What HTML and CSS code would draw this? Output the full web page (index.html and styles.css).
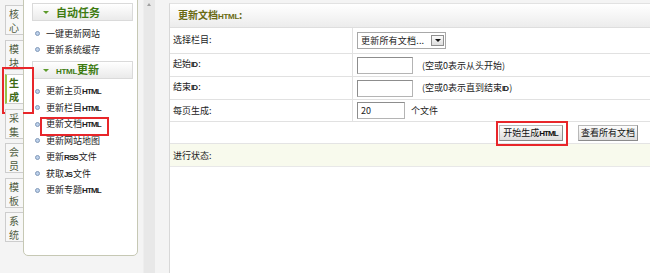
FILE: index.html
```html
<!DOCTYPE html>
<html lang="zh-CN">
<head>
<meta charset="utf-8">
<title>更新文档HTML</title>
<link rel="stylesheet" href="styles.css">
</head>
<body>
<div class="app">
  <nav class="tabs">
    <div class="tab">核<br>心</div>
    <div class="tab">模<br>块</div>
    <div class="tab active mark-tab">生<br>成</div>
    <div class="tab">采<br>集</div>
    <div class="tab">会<br>员</div>
    <div class="tab">模<br>板</div>
    <div class="tab">系<br>统</div>
  </nav>
  <aside class="menu">
    <div class="menu-head"><span class="tri"></span><span>自动任务</span></div>
    <ul class="menu-list">
      <li><span class="dot"></span><span>一键更新网站</span></li>
      <li><span class="dot"></span><span>更新系统缓存</span></li>
    </ul>
    <div class="menu-head head2"><span class="tri"></span><span><span class="en-head">HTML</span>更新</span></div>
    <ul class="menu-list">
      <li><span class="dot"></span><span>更新主页<span class="en">HTML</span></span></li>
      <li><span class="dot"></span><span>更新栏目<span class="en">HTML</span></span></li>
      <li class="mark-item"><span class="dot"></span><span>更新文档<span class="en">HTML</span></span></li>
      <li><span class="dot"></span><span>更新网站地图</span></li>
      <li><span class="dot"></span><span>更新<span class="en">RSS</span>文件</span></li>
      <li><span class="dot"></span><span>获取<span class="en">JS</span>文件</span></li>
      <li><span class="dot"></span><span>更新专题<span class="en">HTML</span></span></li>
    </ul>
  </aside>
  <div class="gutter"><div class="bar"><span class="up"></span></div></div>
  <main class="main">
    <div class="main-head"><span>更新文档<span class="en-head">HTML</span>:</span></div>
    <div class="form">
      <div class="row r1">
        <div class="label"><span>选择栏目:</span></div>
        <div class="field">
          <div class="select"><span class="sel-text">更新所有文档...</span><span class="sel-btn"><span class="down"></span></span></div>
        </div>
      </div>
      <div class="row">
        <div class="label"><span>起始<span class="en">ID</span>:</span></div>
        <div class="field"><input class="inp" type="text" value=""><span class="hint">(空或0表示从头开始)</span></div>
      </div>
      <div class="row">
        <div class="label"><span>结束<span class="en">ID</span>:</span></div>
        <div class="field"><input class="inp" type="text" value=""><span class="hint">(空或0表示直到结束<span class="en">ID</span>)</span></div>
      </div>
      <div class="row r4">
        <div class="label"><span>每页生成:</span></div>
        <div class="field"><input class="inp small" type="text" value="20"><span class="unit">个文件</span></div>
      </div>
    </div>
    <div class="actions">
      <span class="mark-btn"><button class="btn b1" type="button">开始生成<span class="en">HTML</span></button></span>
      <button class="btn b2" type="button">查看所有文档</button>
    </div>
    <div class="status">进行状态:</div>
  </main>
</div>
</body>
</html>
```
FILE: styles.css
```css
* { box-sizing: border-box; margin: 0; padding: 0; }
html, body { width: 650px; height: 273px; overflow: hidden; }
body {
  background: #f4f4f4;
  font: 9px/1 "Noto Sans CJK SC", "Liberation Sans", sans-serif;
  color: #222;
}
.app { display: flex; height: 273px; }

/* left vertical tabs */
.tabs {
  width: 23px;
  flex: none;
  display: flex;
  flex-direction: column;
  gap: 4.5px;
  padding: 5px 0 0 5px;
}
.tab {
  position: relative;
  height: 30px;
  width: 18px;
  border: 1px solid #cdcdcd;
  border-right: none;
  background: #f7f7f7;
  color: #4f5c40;
  font-size: 10px;
  line-height: 14px;
  padding: 1px 0 0 3px;
}
.tab.active {
  background: #fff;
  border-left: 2px solid #95c24a;
  padding-left: 2px;
  color: #3d6a14;
  font-weight: bold;
}
.mark-tab::after {
  content: "";
  position: absolute;
  left: -5px;
  top: -8px;
  width: 28px;
  height: 43px;
  border: 2px solid #e8262a;
}

/* menu panel */
.menu {
  width: 115px;
  flex: none;
  height: 260px;
  margin-top: -4px;
  background: #fff;
  border: 1px solid #c6c8b4;
  border-radius: 0 0 5px 5px;
  padding-top: 6px;
}
.menu-head {
  margin-left: 8px;
  width: 101px;
  height: 18px;
  border: 1px solid #dadada;
  background: linear-gradient(#ffffff, #eaeaea);
  display: flex;
  align-items: center;
  padding-left: 10px;
  gap: 7px;
  color: #3e7b12;
  font-weight: bold;
  font-size: 11px;
  white-space: nowrap;
}
.head2 { margin-top: 3px; }
.tri {
  width: 0; height: 0;
  border-left: 3px solid transparent;
  border-right: 3px solid transparent;
  border-top: 3px solid #5c9a2a;
}
.en-head { font-family: "Liberation Sans", sans-serif; font-size: 8px; font-weight: bold; letter-spacing: -0.3px; }
.en { font-family: "Liberation Sans", sans-serif; font-size: 8px; font-weight: bold; letter-spacing: -0.9px; margin-right: 1px; }
.menu-list { list-style: none; padding-top: 4px; }
.menu-list li {
  position: relative;
  height: 16.5px;
  display: flex;
  align-items: center;
  padding-left: 11px;
  gap: 6px;
  color: #222;
  white-space: nowrap;
}
.dot {
  width: 5px; height: 5px;
  border-radius: 50%;
  background: #bcd0ea;
  border: 1px solid #8199b8;
}
.mark-item::after {
  content: "";
  position: absolute;
  left: 16px;
  top: 1px;
  width: 65px;
  height: 15px;
  border: 2px solid #e8262a;
}

/* scroll gutter */
.gutter {
  width: 31px;
  flex: none;
  padding-left: 5px;
}
.bar {
  position: relative;
  width: 12px;
  height: 100%;
  background: #e8e8e8;
  border-left: 1px solid #eeeeee;
}
.up {
  position: absolute;
  left: 3px;
  top: 3px;
  width: 0; height: 0;
  border-left: 2.5px solid transparent;
  border-right: 2.5px solid transparent;
  border-bottom: 3px solid #a0a0a0;
}

/* main */
.main {
  flex: 1;
  margin-top: 3px;
  background: #fff;
  border-left: 1px solid #d8d8d8;
  border-top: 1px solid #e2e2e2;
  display: flex;
  flex-direction: column;
}
.main-head {
  height: 24px;
  border-bottom: 1px solid #dedede;
  background: linear-gradient(#ffffff, #ececec);
  display: flex;
  align-items: center;
  padding-left: 8px;
  color: #6a6a12;
  font-weight: bold;
  font-size: 10px;
}
.row {
  display: grid;
  grid-template-columns: 183px 1fr;
  height: 23px;
  border-bottom: 1px solid #e1e1e1;
}
.row.r1 { height: 26px; }
.row.r4 { height: 22px; }
.label {
  border-right: 1px solid #e1e1e1;
  display: flex;
  align-items: center;
  padding: 0 0 2px 3px;
  white-space: nowrap;
}
.r4 .label { padding-bottom: 0; }
.field {
  display: flex;
  align-items: center;
  padding-left: 4px;
  white-space: nowrap;
}
.select {
  width: 89px;
  height: 17px;
  border: 1px solid #a8a8a8;
  display: flex;
  align-items: center;
  justify-content: space-between;
  padding: 0 1px 0 3px;
  background: #fff;
}
.sel-text { letter-spacing: 0.2px; }
.sel-btn {
  width: 13px;
  height: 11px;
  border: 1px solid #8f8f8f;
  background: linear-gradient(#fafafa, #dedede);
  display: flex;
  align-items: center;
  justify-content: center;
}
.down {
  width: 0; height: 0;
  border-left: 3px solid transparent;
  border-right: 3px solid transparent;
  border-top: 3px solid #111;
}
.inp {
  width: 56px;
  height: 17px;
  border: 1px solid #b4b4b4;
  border-top-color: #8d8d8d;
  border-left-color: #8d8d8d;
  font: 9px "Noto Sans CJK SC", "Liberation Sans", sans-serif;
  padding-left: 3px;
  color: #222;
  outline: none;
}
.inp.small { width: 48px; }
.hint { margin-left: 9px; color: #222; }
.unit { margin-left: 6px; }

.actions {
  height: 22px;
  border-bottom: 1px solid #e4e4e4;
  display: flex;
  align-items: center;
  justify-content: flex-end;
  gap: 15px;
  padding-right: 12px;
}
.mark-btn { position: relative; display: block; height: 16px; }
.mark-btn::after {
  content: "";
  position: absolute;
  left: -3px;
  top: -4px;
  right: -5px;
  bottom: -5px;
  border: 2px solid #e8262a;
}
.btn {
  display: block;
  height: 16px;
  padding: 0;
  border: 1px solid #b8b8b8;
  border-right-color: #8c8c8c;
  border-bottom-color: #8c8c8c;
  background: linear-gradient(#fdfdfd, #dddddd);
  font: 9px/14px "Noto Sans CJK SC", "Liberation Sans", sans-serif;
  color: #111;
  text-align: center;
  white-space: nowrap;
}
.b1 { width: 64px; }
.b2 { width: 60px; }
.status {
  height: 23px;
  background: #f8faed;
  border-bottom: 1px solid #e8e8e8;
  display: flex;
  align-items: center;
  padding-left: 3px;
}
```
